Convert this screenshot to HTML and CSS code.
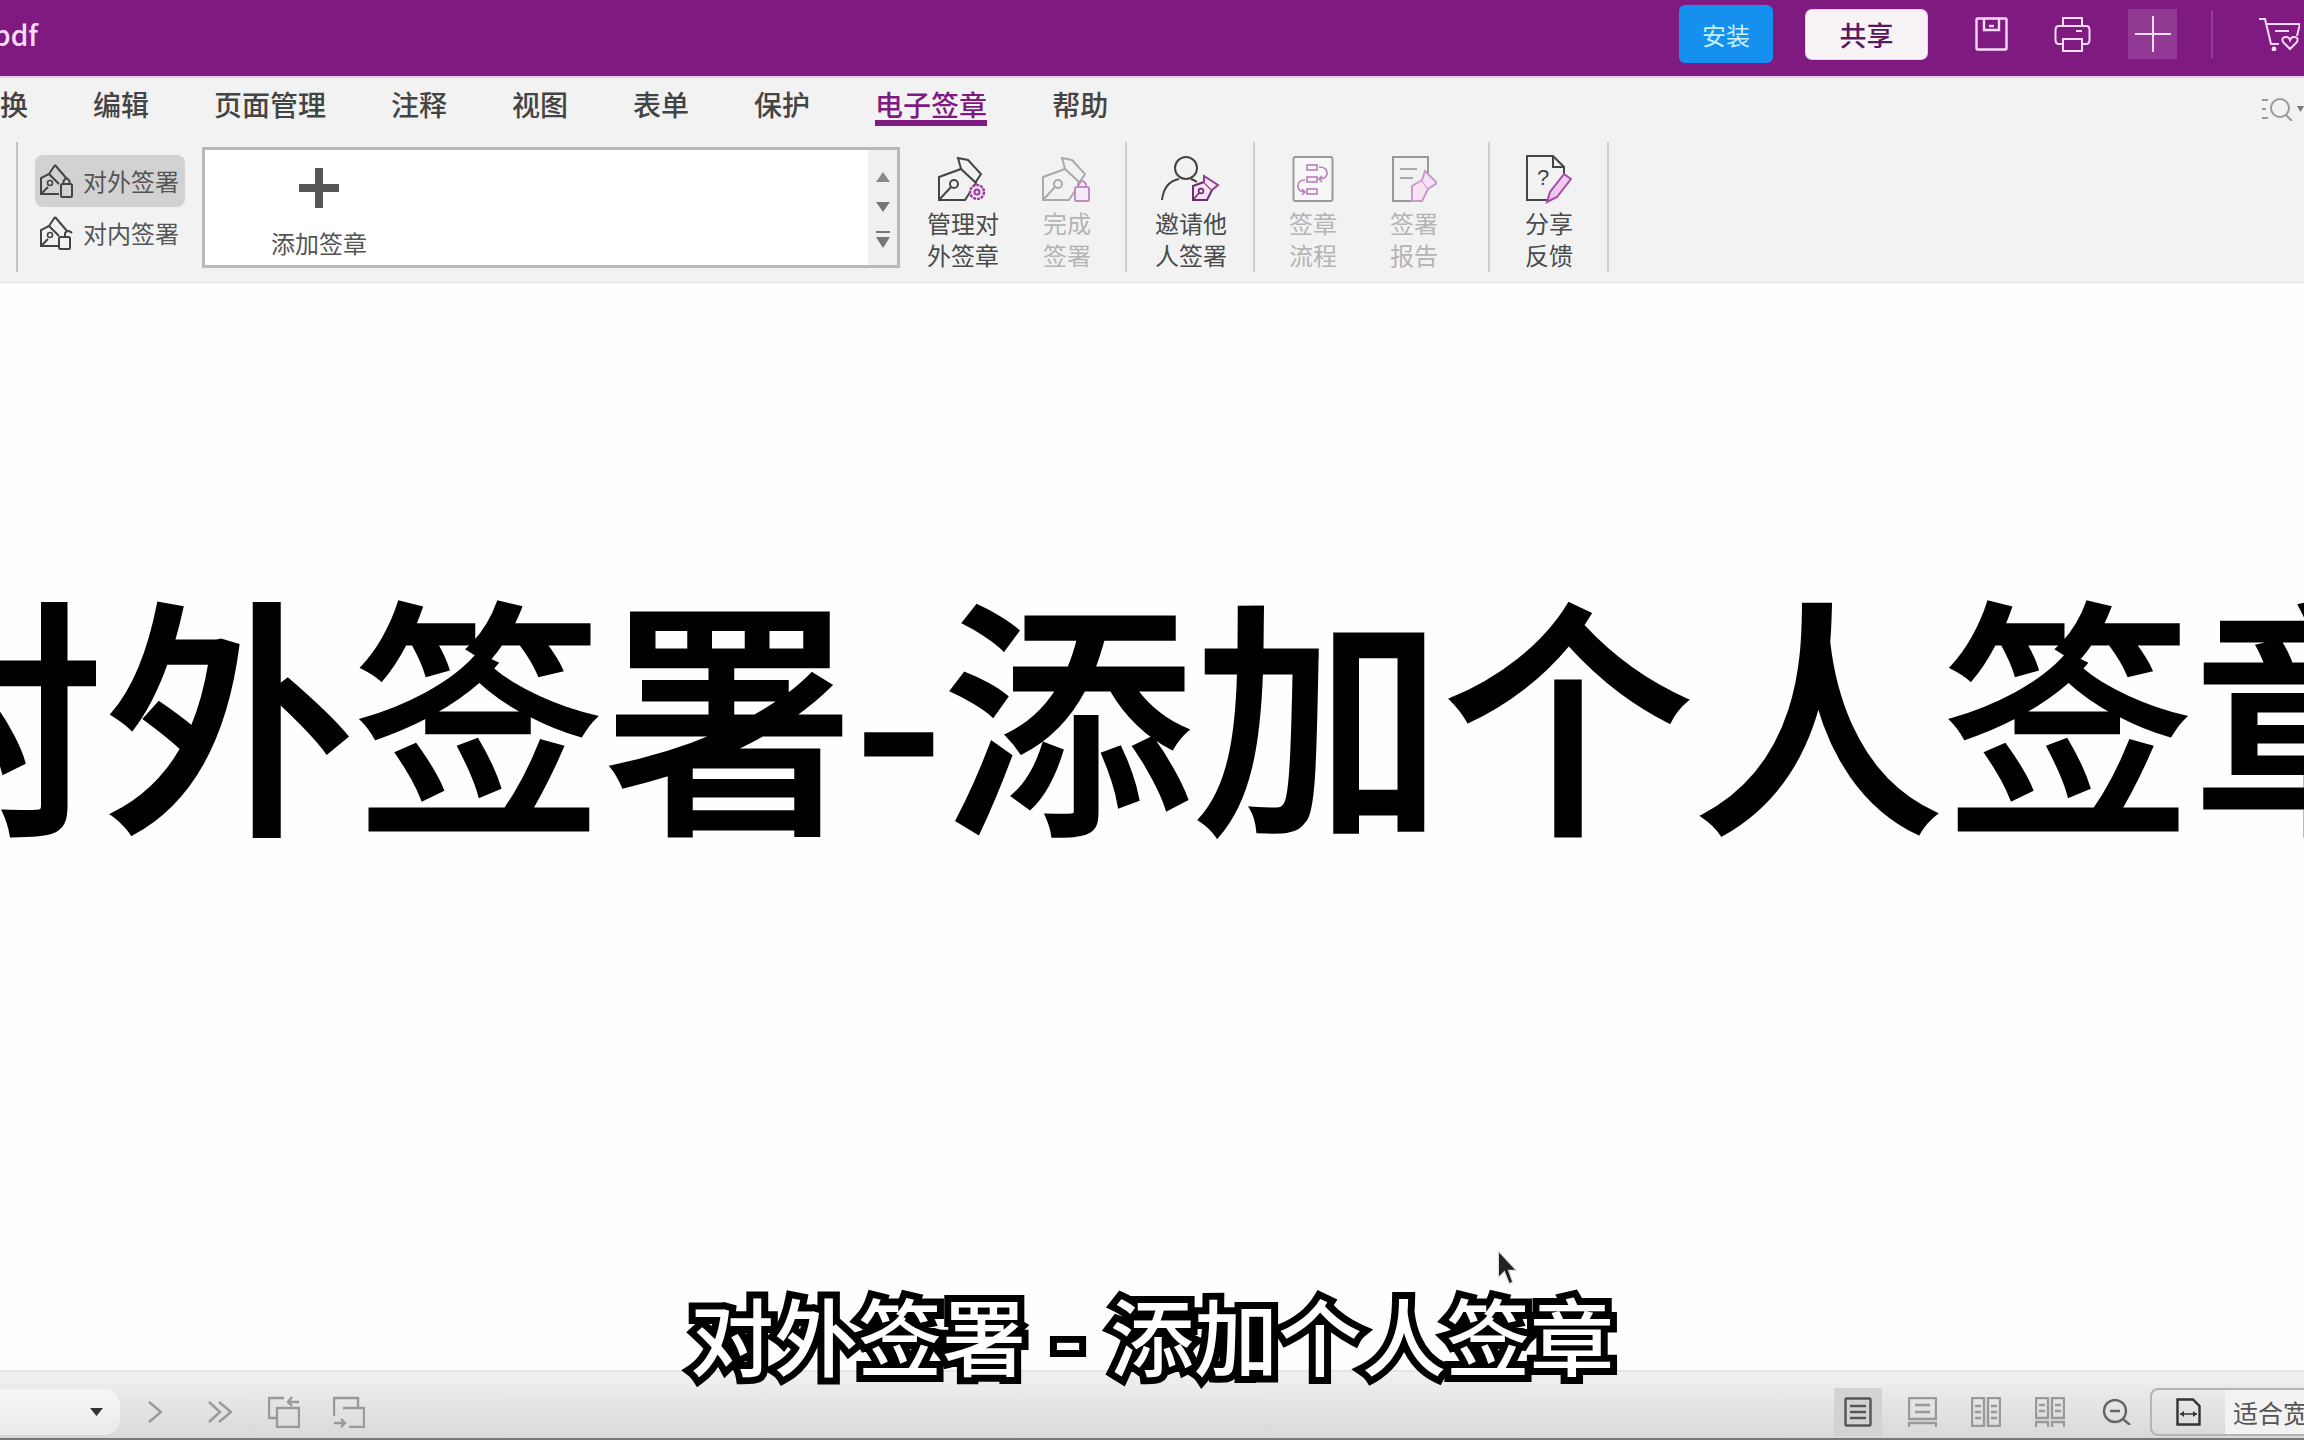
FILE: index.html
```html
<!DOCTYPE html>
<html lang="zh-CN">
<head>
<meta charset="utf-8">
<title>对外签署 - 添加个人签章</title>
<link rel="stylesheet" href="styles.css">
</head>
<body>
<svg class="defs" width="0" height="0">
  <symbol id="nib" viewBox="0 0 50 46">
    <path d="M1 21 23 13 38 27 27 44H1Z" fill="none" stroke="currentColor" stroke-width="2"/>
    <path d="M23 13 20 2 30 4 43 18 37 27" fill="none" stroke="currentColor" stroke-width="2"/>
    <circle cx="16" cy="28" r="4" fill="none" stroke="currentColor" stroke-width="2"/>
    <path d="M1 44 13 31" stroke="currentColor" stroke-width="2"/>
  </symbol>
  <symbol id="smallnib" viewBox="0 0 30 28">
    <path d="M2 12 13 8 21 16 16 26H2Z" fill="#f6e4f6" stroke="#6d2a70" stroke-width="2"/>
    <path d="M13 8 13 2 27 11 21 16" fill="#f6e4f6" stroke="#8f3f90" stroke-width="2"/>
    <circle cx="10" cy="17" r="2.400" fill="none" stroke="#6d2a70" stroke-width="1.600"/>
    <path d="M2 26 8 19" stroke="#6d2a70" stroke-width="1.600"/>
  </symbol>
  <symbol id="signout" viewBox="0 0 34 34">
    <path d="M15 1 9 10 1 14V30H19" fill="none" stroke="#444" stroke-width="2"/>
    <path d="M15 1 27 15M9 10 19 20" fill="none" stroke="#444" stroke-width="2"/>
    <path d="M1 30 8 23" stroke="#444" stroke-width="2"/>
    <circle cx="10" cy="19" r="2.500" fill="none" stroke="#444" stroke-width="1.600"/>
  </symbol>
</svg>

<header class="topbar">
  <span class="filename">pdf</span>
  <button class="btn btn-install">安装</button>
  <button class="btn btn-share">共享</button>
  <svg class="ti ti-save" width="33" height="34" viewBox="0 0 33 34" fill="none" stroke="#f6dcf6" stroke-width="2.400">
    <rect x="1.500" y="1.500" width="30" height="31" rx="1"/>
    <path d="M9 2V13H24V2"/><path d="M14 9H19"/>
  </svg>
  <svg class="ti ti-print" width="37" height="36" viewBox="0 0 37 36" fill="none" stroke="#f6dcf6" stroke-width="2">
    <path d="M9 10V2H28V10"/>
    <path d="M9 28H5Q1.500 28 1.500 24V14Q1.500 10 5 10H32Q35.500 10 35.500 14V24Q35.500 28 32 28H28"/>
    <rect x="9" y="23" width="19" height="12"/><path d="M22 15H28"/>
  </svg>
  <div class="ti-plus">
    <svg width="36" height="36" viewBox="0 0 36 36" stroke="#f2dcf2" stroke-width="2"><path d="M18 0V36M0 18H36"/></svg>
  </div>
  <span class="top-sep"></span>
  <svg class="ti ti-cart" width="41" height="34" viewBox="0 0 41 34" fill="none" stroke="#f6dcf6" stroke-width="2">
    <path d="M0 2H6L12 27H20"/><path d="M8 7H41L38 19"/><path d="M16 14H30"/>
    <circle cx="15" cy="32" r="1.400" fill="#f6dcf6"/>
    <path d="M31 32 24 25Q22 20 27 20 30 20 31 23 32 20 35 20 40 20 38 25Z" fill="#7f1a80"/>
  </svg>
</header>

<nav class="menu">
  <span class="menu-item">换</span>
  <span class="menu-item">编辑</span>
  <span class="menu-item">页面管理</span>
  <span class="menu-item">注释</span>
  <span class="menu-item">视图</span>
  <span class="menu-item">表单</span>
  <span class="menu-item">保护</span>
  <span class="menu-item is-active">电子签章</span>
  <span class="menu-item">帮助</span>
  <svg class="menu-search" width="42" height="24" viewBox="0 0 42 24" fill="none" stroke="#999" stroke-width="2">
    <path d="M0 3H6M0 12H4M0 21H6"/><circle cx="18" cy="11" r="9"/><path d="M24 18 30 24"/>
    <path d="M35 9H42L38.500 15Z" fill="#777" stroke="none"/>
  </svg>
</nav>

<section class="ribbon">
  <span class="rib-sep"></span>
  <div class="sign-list">
    <div class="sign-item is-on">
      <svg width="34" height="34" viewBox="0 0 34 34"><use href="#signout" width="34" height="34"/><rect x="21" y="20" width="11" height="13" rx="1.500" fill="none" stroke="#444" stroke-width="2"/><path d="M23.500 20V17Q26.500 12 29.500 17V20" fill="none" stroke="#444" stroke-width="2"/></svg>
      <span>对外签署</span>
    </div>
    <div class="sign-item">
      <svg width="34" height="34" viewBox="0 0 34 34"><use href="#signout" width="34" height="34"/><rect x="19" y="21" width="11" height="12" rx="1.500" fill="none" stroke="#444" stroke-width="2"/><path d="M25 21V17Q28 13 32 17" fill="none" stroke="#444" stroke-width="2"/></svg>
      <span>对内签署</span>
    </div>
  </div>

  <div class="gallery">
    <div class="gallery-main">
      <div class="add-sign">
        <svg width="40" height="40" viewBox="0 0 40 40" fill="#555"><path d="M16 0H24V16H40V24H24V40H16V24H0V16H16Z"/></svg>
        <span>添加签章</span>
      </div>
    </div>
    <div class="gallery-scroll">
      <svg width="14" height="12" viewBox="0 0 14 12" fill="#8a8a8a"><path d="M7 1 14 11H0Z"/></svg>
      <svg width="14" height="12" viewBox="0 0 14 12" fill="#777"><path d="M7 11 14 1H0Z"/></svg>
      <svg width="14" height="18" viewBox="0 0 14 18" fill="#777"><path d="M0 0H14V2H0Z M0 6H14L7 17Z"/></svg>
    </div>
  </div>

  <div class="group group-a">
    <div class="tool">
      <svg class="tool-icon" width="50" height="46" viewBox="0 0 50 46"><use href="#nib" width="50" height="46" color="#444"/><circle cx="39" cy="36" r="7" fill="#f6e4f6" stroke="#9a3c9c" stroke-width="2.400" stroke-dasharray="3 1"/><circle cx="39" cy="36" r="2.500" fill="none" stroke="#9a3c9c" stroke-width="2"/></svg>
      <span>管理对<br>外签章</span>
    </div>
    <div class="tool is-off">
      <svg class="tool-icon" width="50" height="46" viewBox="0 0 50 46"><use href="#nib" width="50" height="46" color="#aaa"/><rect x="33" y="31" width="14" height="14" rx="1.500" fill="#f6eaf6" stroke="#c48ac6" stroke-width="2"/><path d="M36 31V28Q40 22 44 28V31" fill="none" stroke="#c48ac6" stroke-width="2"/></svg>
      <span>完成<br>签署</span>
    </div>
  </div>

  <div class="group group-b">
    <div class="tool">
      <svg class="tool-icon" width="61" height="46" viewBox="0 0 61 46" fill="none"><ellipse cx="25" cy="12" rx="11" ry="11" stroke="#444" stroke-width="2"/><path d="M1 44Q3 26 18 23M30 23Q33 24 36 26" stroke="#444" stroke-width="2"/><use href="#smallnib" x="30" y="18" width="30" height="28"/></svg>
      <span>邀请他<br>人签署</span>
    </div>
  </div>

  <div class="group group-c">
    <div class="tool is-off">
      <svg class="tool-icon" width="42" height="46" viewBox="0 0 42 46" fill="none"><rect x="1.500" y="1" width="39" height="44" rx="2" fill="#f7f7f7" stroke="#999" stroke-width="2"/><g stroke="#b87ebb" stroke-width="1.600"><rect x="15" y="9" width="10" height="5"/><rect x="15" y="21" width="10" height="5"/><rect x="15" y="33" width="10" height="5"/><path d="M27 11Q35 11 35 17 35 23 27 23M30 20 27 23 30 26M13 24Q6 24 6 30 6 36 13 36M10 33 13 36 10 39"/></g></svg>
      <span>签章<br>流程</span>
    </div>
    <div class="tool is-off">
      <svg class="tool-icon" width="46" height="46" viewBox="0 0 46 46" fill="none"><path d="M20 45H2V1H37V20" stroke="#999" stroke-width="2"/><path d="M9 13H26M9 22H22" stroke="#aaa" stroke-width="2"/><g stroke="#c99acb" stroke-width="2" fill="#f6e4f6"><path d="M21 30 31 24 37 33 31 45H21Z"/><path d="M31 24 34 15 46 27 37 33"/></g></svg>
      <span>签署<br>报告</span>
    </div>
  </div>

  <div class="group group-d">
    <div class="tool">
      <svg class="tool-icon" width="46" height="48" viewBox="0 0 46 48" fill="none"><path d="M22 45H1V1H27L38 12V24M27 1V12H38" stroke="#444" stroke-width="2"/><text class="qmark" x="11" y="30">?</text><path d="M21 47 24 37 38 19 45 24 31 42Z" fill="#efc8ef" stroke="#a64aa8" stroke-width="2"/></svg>
      <span>分享<br>反馈</span>
    </div>
  </div>
</section>

<main class="doc">
  <h1 class="doc-title">对外签署-添加个人签章</h1>
</main>

<footer class="status">
  <div class="page-select"><svg width="13" height="8" viewBox="0 0 13 8" fill="#333"><path d="M0 0H13L6.500 8Z"/></svg></div>
  <svg class="st st-next" width="14" height="22" viewBox="0 0 14 22" fill="none" stroke="#999" stroke-width="2.400"><path d="M1 1 13 11 1 21"/></svg>
  <svg class="st st-last" width="24" height="22" viewBox="0 0 24 22" fill="none" stroke="#999" stroke-width="2.400"><path d="M1 1 12 11 1 21M11 1 23 11 11 21"/></svg>
  <svg class="st st-rotl" width="32" height="32" viewBox="0 0 32 32" fill="none" stroke="#999" stroke-width="2.400"><path d="M16 2H1V22H9"/><rect x="9" y="12" width="22" height="19"/><path d="M31 6H20M24 1 20 6 24 10"/></svg>
  <svg class="st st-rotr" width="32" height="32" viewBox="0 0 32 32" fill="none" stroke="#999" stroke-width="2.400"><path d="M25 11V2H1V20"/><path d="M10 12H31V31H16"/><path d="M1 27H12M8 23 12 27 8 31"/></svg>
  <div class="views">
    <div class="view is-on"><svg width="28" height="30" viewBox="0 0 28 30" fill="none" stroke="#555" stroke-width="2.400"><rect x="1.500" y="1.500" width="25" height="27" rx="1"/><path d="M6 9H22M6 15H22M6 21H22"/></svg></div>
    <div class="view"><svg width="29" height="30" viewBox="0 0 29 30" fill="none" stroke="#999" stroke-width="2.400"><path d="M1 22V1H28V22ZM1 30V26H28V30M7 8H22M7 15H22"/></svg></div>
    <div class="view"><svg width="30" height="30" viewBox="0 0 30 30" fill="none" stroke="#999" stroke-width="2.400"><rect x="1" y="1" width="12" height="28"/><rect x="17" y="1" width="12" height="28"/><path d="M4 9H10M4 15H10M4 21H10M20 9H26M20 15H26M20 21H26"/></svg></div>
    <div class="view"><svg width="30" height="30" viewBox="0 0 30 30" fill="none" stroke="#999" stroke-width="2.400"><path d="M1 1H13V21H1ZM17 1H29V21H17ZM1 30V25H13V30M17 30V25H29V30M4 8H10M4 14H10M20 8H26M20 14H26"/></svg></div>
    <div class="view view-zoom"><svg width="30" height="26" viewBox="0 0 30 26" fill="none" stroke="#666" stroke-width="2.400"><circle cx="13" cy="12" r="11"/><path d="M8 12H18M21 20 28 26"/></svg></div>
    <div class="zoom-box">
      <div class="zoom-icon"><svg width="25" height="28" viewBox="0 0 25 28" fill="none" stroke="#333" stroke-width="2.400"><path d="M1.500 26.500V1.500H17L23.500 8V26.500Z"/><path d="M4 16H21" stroke-width="1.600"/><path d="M8 13 4 16 8 19ZM17 13 21 16 17 19Z" fill="#333" stroke="none"/></svg></div>
      <div class="zoom-value">适合宽度</div>
    </div>
  </div>
</footer>

<div class="subtitle">对外签署 - 添加个人签章</div>
<svg class="cursor" width="22" height="36" viewBox="0 0 18 30"><path d="M1 1V23L6 18 10 28 13 27 9.500 17H16Z" fill="#222" stroke="#ddd" stroke-width="1"/></svg>
</body>
</html>
```
FILE: styles.css
```css
* { box-sizing: border-box; }
html, body { margin: 0; padding: 0; }
body {
  position: relative;
  width: 2304px;
  height: 1440px;
  overflow: hidden;
  display: flex;
  flex-direction: column;
  background: #fff;
  color: #555;
  font-family: "Noto Sans CJK SC", "Noto Sans", sans-serif;
  font-size: 24px;
}
.defs { position: absolute; }
svg { display: block; flex-shrink: 0; }

/* Title bar */
.topbar {
  height: 78px;
  flex-shrink: 0;
  display: flex;
  align-items: center;
  padding-bottom: 8px;
  background: #7f1a80;
  border-bottom: 2px solid #f3c6f3;
}
.filename { margin-left: -7px; color: #f8dcf8; font-size: 28px; font-weight: 500; line-height: 40px; }
.btn { border: 0; padding: 0; font-family: inherit; border-radius: 6px; }
.btn-install {
  margin-left: auto;
  width: 94px;
  height: 58px;
  background: #1590ee;
  color: #c8f0fa;
  font-size: 24px;
}
.btn-share {
  margin-left: 33px;
  width: 121px;
  height: 49px;
  background: #f7f3f7;
  box-shadow: 0 0 0 1px #f0c8f0;
  color: #5a1a60;
  font-size: 27px;
  font-weight: 500;
}
.ti-save { margin-left: 48px; }
.ti-print { margin-left: 46px; }
.ti-plus {
  margin-left: 37px;
  width: 49px;
  height: 50px;
  display: flex;
  align-items: center;
  justify-content: center;
  background: #923a93;
}
.top-sep { margin-left: 34px; width: 2px; height: 48px; background: #933c94; }
.ti-cart { margin-left: 46px; margin-right: 4px; }

/* Menu */
.menu {
  height: 62px;
  flex-shrink: 0;
  display: flex;
  align-items: flex-start;
  gap: 65px;
  padding-top: 11px;
  background: #f2f2f2;
}
.menu-item {
  color: #444;
  font-size: 28px;
  font-weight: 500;
  line-height: 30px;
  height: 37px;
}
.menu-item.is-active { color: #7f1a80; border-bottom: 6px solid #7f1a80; }
.menu-search { margin-left: auto; margin-top: 8px; }

/* Ribbon */
.ribbon {
  height: 143px;
  flex-shrink: 0;
  display: flex;
  align-items: flex-start;
  background: #f2f2f2;
  border-bottom: 1px solid #e4e4e4;
}
.rib-sep { margin: 2px 0 0 16px; width: 2px; height: 130px; background: #c4c4c4; }
.sign-list { margin: 15px 0 0 17px; width: 150px; display: flex; flex-direction: column; }
.sign-item {
  height: 52px;
  padding-left: 5px;
  display: flex;
  align-items: center;
  gap: 9px;
  border-radius: 8px;
  line-height: 32px;
}
.sign-item.is-on { background: #d2d2d2; }
.gallery {
  margin: 7px 0 0 17px;
  width: 698px;
  height: 121px;
  display: flex;
  background: #fff;
  border: 3px solid #b8b8b8;
}
.gallery-main { flex: 1; padding-left: 40px; }
.add-sign {
  width: 148px;
  padding-top: 18px;
  display: flex;
  flex-direction: column;
  align-items: center;
}
.add-sign span { margin-top: 19px; line-height: 32px; }
.gallery-scroll {
  width: 29px;
  padding-top: 21px;
  display: flex;
  flex-direction: column;
  align-items: center;
  gap: 18px;
  background: #f0f0f0;
}
.group {
  margin-top: 2px;
  height: 130px;
  padding-top: 12px;
  display: flex;
  border-right: 2px solid #cfcfcf;
}
.group-a { padding-left: 15px; padding-right: 10px; gap: 8px; }
.group-b { padding-left: 16px; padding-right: 14px; }
.group-c { padding-left: 10px; padding-right: 26px; gap: 5px; }
.group-d { padding-left: 11px; padding-right: 10px; }
.tool {
  width: 96px;
  display: flex;
  flex-direction: column;
  align-items: center;
  color: #4a4a4a;
  line-height: 32px;
  text-align: center;
}
.tool.is-off { color: #b4b4b4; }
.tool-icon { height: 50px; margin-bottom: 3px; }
.qmark { font-family: "Liberation Sans", sans-serif; font-size: 22px; fill: #444; }

/* Document */
.doc {
  flex: 1;
  min-height: 0;
  padding-top: 298px;
  background: #fefefe;
  overflow: hidden;
}
.doc-title {
  margin: 0 0 0 -146px;
  color: #000;
  font-size: 250px;
  font-weight: 500;
  line-height: 250px;
  white-space: nowrap;
  -webkit-text-stroke: 3px #000;
}

/* Status bar */
.status {
  height: 70px;
  flex-shrink: 0;
  display: flex;
  align-items: center;
  padding-top: 14px;
  overflow: hidden;
  background: linear-gradient(#f0f0f0, #d9d9d9);
  border-top: 2px solid #e4e4e4;
  border-bottom: 2px solid #777;
}
.page-select {
  flex-shrink: 0;
  width: 120px;
  height: 46px;
  padding-left: 90px;
  display: flex;
  align-items: center;
  border-radius: 0 16px 16px 0;
  background: linear-gradient(#f6f6f6, #eaeaea);
}
.st-next { margin-left: 28px; }
.st-last { margin-left: 46px; }
.st-rotl { margin-left: 36px; }
.st-rotr { margin-left: 33px; }
.views { margin-left: 1469px; display: flex; align-items: center; gap: 16px; flex-shrink: 0; }
.view { width: 48px; height: 48px; display: flex; align-items: center; justify-content: center; }
.view.is-on { background: #d3d3d3; }
.view-zoom { margin-left: 3px; }
.zoom-box {
  margin-left: -7px;
  width: 220px;
  height: 48px;
  flex-shrink: 0;
  display: flex;
  border: 2px solid #b4b4b4;
  border-radius: 8px;
  overflow: hidden;
}
.zoom-icon { width: 73px; display: flex; align-items: center; justify-content: center; }
.zoom-value { flex: 1; padding-left: 8px; font-size: 25px; line-height: 44px; white-space: nowrap; background: #f2f2f2; color: #555; }

/* Overlays */
.subtitle {
  position: absolute;
  left: 0;
  right: 0;
  top: 1284px;
  color: #fff;
  font-size: 84px;
  font-weight: 500;
  word-spacing: 8px;
  line-height: 100px;
  text-align: center;
  white-space: pre;
  -webkit-text-stroke: 14px #000;
  paint-order: stroke fill;
}
.cursor { position: absolute; left: 1497px; top: 1250px; }
```
